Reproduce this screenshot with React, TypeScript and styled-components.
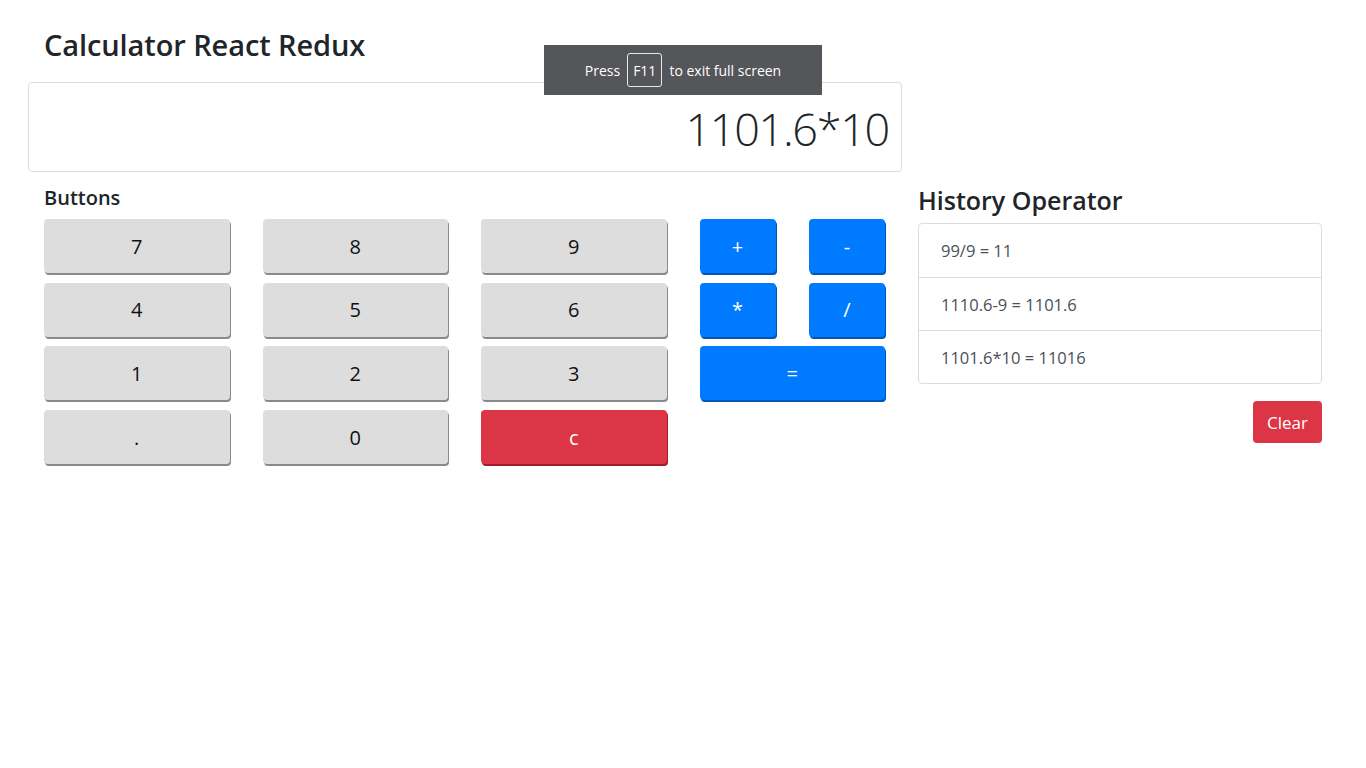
import React from "react";
import styled, { createGlobalStyle } from "styled-components";

const Global = createGlobalStyle`
  html, body { margin: 0; padding: 0; background: #fff; }
  body { font-family: "Open Sans", "Noto Sans", Arial, sans-serif; color: #212529; }
  * { box-sizing: border-box; }
`;

const Page = styled.div`
  display: grid;
  grid-template-columns: 874px 404px;
  align-content: start;
  column-gap: 16px;
  padding: 0 0 0 28px;
  position: relative;
  min-height: 768px;
`;

const Title = styled.h1`
  grid-column: 1 / 2;
  margin: 27px 0 0 16px;
  font-size: 29px;
  font-weight: 600;
  line-height: 36px;
  height: 55px;
  letter-spacing: -0.1px;
`;

const Display = styled.div`
  grid-column: 1 / 2;
  height: 90px;
  border: 1px solid #dcdcdc;
  border-radius: 4px;
  display: flex;
  align-items: center;
  justify-content: flex-end;
  padding: 2px 12px 0;
  font-size: 45px;
  font-weight: 300;
  letter-spacing: -1.3px;
  color: #212529;
`;

const LeftPanel = styled.section`
  padding: 12px 16px 0;
`;

const RightPanel = styled.section`
  padding-top: 13px;
  display: flex;
  flex-direction: column;
`;

const SubHeading = styled.h2`
  margin: 0 0 8px;
  font-size: 20px;
  font-weight: 600;
  line-height: 27px;
`;

const HistoryHeading = styled.h2`
  margin: 0 0 8px;
  font-size: 25px;
  font-weight: 600;
  line-height: 30px;
`;

const Keypad = styled.div`
  display: grid;
  grid-template-columns: repeat(4, 185.5px);
  column-gap: 33px;
  row-gap: 9.7px;
  grid-auto-rows: 54px;
`;

const OpPair = styled.div`
  display: flex;
  justify-content: space-between;
`;

type Variant = "num" | "op" | "danger";

const palette: Record<Variant, { bg: string; edge: string; fg: string }> = {
  num: { bg: "#dddddd", edge: "#8a8a8a", fg: "#111" },
  op: { bg: "#007bff", edge: "#0056b3", fg: "#fff" },
  danger: { bg: "#dc3545", edge: "#a11d2a", fg: "#fff" },
};

const Key = styled.button<{ $v: Variant; $w?: number }>`
  width: ${(p) => (p.$w ? `${p.$w}px` : "100%")};
  height: 100%;
  border: none;
  border-radius: 4px;
  background: ${(p) => palette[p.$v].bg};
  color: ${(p) => palette[p.$v].fg};
  box-shadow: 1px 2px 0 ${(p) => palette[p.$v].edge};
  font-family: "Open Sans", "Noto Sans", Arial, sans-serif;
  font-size: 20px;
  padding: 0;
  cursor: pointer;
`;

const List = styled.ul`
  list-style: none;
  margin: 0;
  padding: 0;
  border: 1px solid #dcdcdc;
  border-radius: 4px;
`;

const Item = styled.li`
  height: 53px;
  display: flex;
  align-items: center;
  padding: 0 22px;
  font-size: 16.5px;
  color: #495057;
  & + & { border-top: 1px solid #dcdcdc; }
`;

const ClearRow = styled.div`
  display: flex;
  justify-content: flex-end;
  margin-top: 17px;
`;

const ClearButton = styled.button`
  height: 42px;
  padding: 0 14px;
  border: none;
  border-radius: 4px;
  background: #dc3545;
  color: #fff;
  font-family: "Open Sans", "Noto Sans", Arial, sans-serif;
  font-size: 17px;
  cursor: pointer;
`;

const Toast = styled.div`
  position: absolute;
  left: 544px;
  top: 45px;
  width: 278px;
  height: 50px;
  background: rgba(70, 72, 75, 0.92);
  color: #fff;
  display: flex;
  align-items: center;
  justify-content: center;
  gap: 7px;
  font-size: 14px;
`;

const Kbd = styled.span`
  border: 1px solid #e8e8e8;
  border-radius: 3px;
  padding: 0 5px;
  height: 34px;
  display: flex;
  align-items: center;
`;

const history = ["99/9 = 11", "1110.6-9 = 1101.6", "1101.6*10 = 11016"];

export default function App() {
  return (
    <>
      <Global />
      <Page>
        <Title>Calculator React Redux</Title>
        <div />
        <Display>1101.6*10</Display>
        <div />
        <LeftPanel>
          <SubHeading>Buttons</SubHeading>
          <Keypad>
            <Key $v="num">7</Key>
            <Key $v="num">8</Key>
            <Key $v="num">9</Key>
            <OpPair>
              <Key $v="op" $w={76}>+</Key>
              <Key $v="op" $w={76}>-</Key>
            </OpPair>
            <Key $v="num">4</Key>
            <Key $v="num">5</Key>
            <Key $v="num">6</Key>
            <OpPair>
              <Key $v="op" $w={76}>*</Key>
              <Key $v="op" $w={76}>/</Key>
            </OpPair>
            <Key $v="num">1</Key>
            <Key $v="num">2</Key>
            <Key $v="num">3</Key>
            <Key $v="op">=</Key>
            <Key $v="num">.</Key>
            <Key $v="num">0</Key>
            <Key $v="danger">c</Key>
          </Keypad>
        </LeftPanel>
        <RightPanel>
          <HistoryHeading>History Operator</HistoryHeading>
          <List>
            {history.map((h) => (
              <Item key={h}>{h}</Item>
            ))}
          </List>
          <ClearRow>
            <ClearButton>Clear</ClearButton>
          </ClearRow>
        </RightPanel>
        <Toast>
          Press <Kbd>F11</Kbd> to exit full screen
        </Toast>
      </Page>
    </>
  );
}
